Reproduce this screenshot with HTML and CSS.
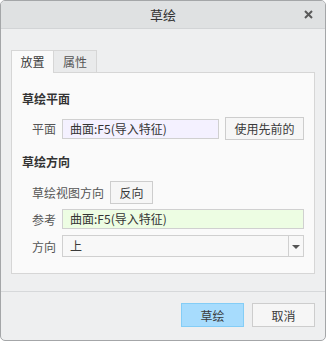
FILE: index.html
```html
<!DOCTYPE html>
<html lang="zh-CN">

<head>
    <meta charset="UTF-8">
    <meta name="viewport" content="width=device-width, initial-scale=1.0">
    <title>草绘</title>
    <link rel="stylesheet" href="styles.css">
</head>

<body>
    <div class="dialog">
        <div class="titlebar">
            <span></span>
            <span class="title">草绘</span>
            <span class="close">
                <svg width="9" height="9" viewBox="0 0 9 9">
                    <path d="M1 1 L8 8 M8 1 L1 8" stroke="#5a5a5a" stroke-width="2" />
                </svg>
            </span>
        </div>

        <div class="content">
            <div class="tabs">
                <div class="tab active">放置</div>
                <div class="tab">属性</div>
            </div>
            <div class="panel">
                <div class="section-title">草绘平面</div>
                <div class="row row-plane">
                    <span class="label">平面</span>
                    <div class="field field-plane">曲面:F5(导入特征)</div>
                    <button class="btn btn-wide">使用先前的</button>
                </div>

                <div class="section-title section-two">草绘方向</div>
                <div class="row row-view">
                    <span class="label">草绘视图方向</span>
                    <button class="btn btn-small">反向</button>
                </div>
                <div class="row row-ref">
                    <span class="label">参考</span>
                    <div class="field field-ref">曲面:F5(导入特征)</div>
                </div>
                <div class="row row-dir">
                    <span class="label">方向</span>
                    <div class="select">
                        <span class="select-value">上</span>
                        <span class="select-arrow"></span>
                    </div>
                </div>
            </div>
        </div>

        <div class="footer">
            <button class="btn btn-footer btn-primary">草绘</button>
            <button class="btn btn-footer">取消</button>
        </div>
    </div>
</body>

</html>
```

FILE: styles.css
```css
* {
    box-sizing: border-box;
}

body {
    margin: 0;
    background: #ffffff;
    font-family: "Noto Sans CJK SC", "Noto Sans", sans-serif;
    font-size: 12px;
    color: #3a3a3a;
}

.dialog {
    width: 326px;
    height: 341px;
    border: 1px solid #a4a6a8;
    border-radius: 5px;
    background: #eeeff0;
    display: flex;
    flex-direction: column;
    overflow: hidden;
}

/* Title bar */
.titlebar {
    height: 28px;
    background: #dfe1e2;
    border-bottom: 1px solid #d2d4d6;
    display: grid;
    grid-template-columns: 1fr auto 1fr;
    align-items: center;
}

.title {
    font-size: 13px;
    color: #333;
}

.close {
    justify-self: end;
    margin-right: 12px;
    display: flex;
}

/* Tabs + panel */
.content {
    padding: 21px 10px 0 10px;
}

.tabs {
    display: flex;
    height: 22px;
    margin-left: 0;
}

.tab {
    width: 43px;
    height: 22px;
    border: 1px solid #d6d6d6;
    border-bottom: none;
    background: #e9eaeb;
    text-align: center;
    line-height: 21px;
    color: #555;
    margin-top: 0;
}

.tab.active {
    width: 43px;
    background: #fafafa;
    height: 23px;
    position: relative;
    z-index: 1;
    color: #3a3a3a;
}

.tab + .tab {
    margin-left: 0;
    border-left: none;
}

.panel {
    height: 202px;
    background: #fafafa;
    border: 1px solid #d6d6d6;
    padding: 18px 10px 0 10px;
}

.section-title {
    font-weight: bold;
    line-height: 16px;
    color: #333;
}

.section-two {
    margin-top: 14px;
}

.row {
    display: flex;
    align-items: center;
    gap: 6px;
    padding-left: 10px;
}

.row-plane {
    margin-top: 10px;
}

.row-view {
    margin-top: 11px;
}

.row-ref {
    margin-top: 5px;
}

.row-dir {
    margin-top: 6px;
}

.label {
    color: #555;
    min-width: 24px;
}

.field {
    height: 20px;
    border: 1px solid #d0d0d0;
    padding-left: 7px;
    line-height: 18px;
    color: #333;
}

.field-plane {
    width: 157px;
    background: #f4f1ff;
}

.field-ref {
    width: 242px;
    background: #edfde3;
}

.select {
    width: 242px;
    height: 22px;
    border: 1px solid #d0d0d0;
    background: #f8f8f8;
    display: flex;
    align-items: stretch;
}

.select-value {
    flex: 1;
    padding-left: 7px;
    line-height: 20px;
}

.select-arrow {
    width: 15px;
    border-left: 1px solid #d0d0d0;
    display: flex;
    align-items: center;
    justify-content: center;
}

.select-arrow::after {
    content: "";
    border-left: 4px solid transparent;
    border-right: 4px solid transparent;
    border-top: 4px solid #555;
    margin-top: 1px;
}

.btn {
    font-family: inherit;
    font-size: 12px;
    color: #3a3a3a;
    background: #f6f6f6;
    border: 1px solid #cdcdcd;
    padding: 0;
    height: 23px;
}

.btn-wide {
    width: 79px;
}

.btn-small {
    width: 43px;
}

/* Footer */
.footer {
    margin-top: 17px;
    border-top: 1px solid #d6d8da;
    padding: 11px 10px 0 0;
    display: flex;
    justify-content: flex-end;
    gap: 8px;
}

.btn-footer {
    width: 63px;
    height: 24px;
}

.btn-primary {
    background: #a7dcfd;
    border-color: #84cdf6;
}
```
